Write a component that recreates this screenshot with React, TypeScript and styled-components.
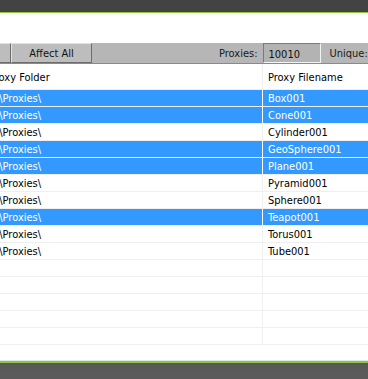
import React from "react";
import styled, { createGlobalStyle } from "styled-components";

const GlobalStyle = createGlobalStyle`
  html, body {
    margin: 0;
    padding: 0;
    background: #ffffff;
  }
  body {
    width: 368px;
    height: 379px;
    overflow: hidden;
    font-family: "DejaVu Sans Condensed", "Liberation Sans", sans-serif;
    font-size: 11px;
  }
`;

const Main = styled.div`
  display: flex;
  flex-direction: column;
  width: 368px;
  height: 379px;
  overflow: hidden;
`;

const TitleStrip = styled.div`
  height: 12px;
  flex: none;
  background: #434343;
  border-bottom: 1px solid #8dc63f;
`;

const Spacer = styled.div`
  height: 30px;
  flex: none;
  background: #ffffff;
`;

const Toolbar = styled.div`
  height: 20px;
  flex: none;
  display: flex;
  align-items: stretch;
  background: #b6b6b6;
  border-bottom: 1px solid #8a8a8a;
  overflow: hidden;
`;

const ToolbarTrack = styled.div`
  display: flex;
  align-items: stretch;
  margin-left: -70px;
  white-space: nowrap;
`;

const Button = styled.div<{ $width: number }>`
  width: ${(p) => p.$width}px;
  box-sizing: border-box;
  display: flex;
  align-items: center;
  justify-content: center;
  background: #bdbdbd;
  color: #111;
  border-style: solid;
  border-width: 1px;
  border-color: #e2e2e2 #6c6c6c #6c6c6c #e2e2e2;
`;

const Label = styled.span<{ $left: number }>`
  margin-left: ${(p) => p.$left}px;
  display: flex;
  align-items: center;
  padding-right: 5px;
  color: #1a1a1a;
`;

const NumberBox = styled.div`
  width: 58px;
  box-sizing: border-box;
  display: flex;
  align-items: center;
  padding: 2px 0 0 5px;
  background: #b3b3b3;
  color: #111;
  border-style: solid;
  border-width: 1px;
  border-color: #7a7a7a #f4f4f4 #f4f4f4 #7a7a7a;
`;

const View = styled.div`
  flex: 1;
  overflow: hidden;
  background: #ffffff;
`;

const Track = styled.div`
  margin-left: -15px;
  display: flex;
  flex-direction: column;
  width: 460px;
`;

const Row = styled.div<{ $head?: boolean; $sel?: boolean }>`
  display: grid;
  grid-template-columns: 278px 1fr;
  height: ${(p) => (p.$head ? 25 : 16)}px;
  border-bottom: 1px solid #efefef;
  background: ${(p) => (p.$sel ? "#3399ff" : "#ffffff")};
  color: ${(p) => (p.$sel ? "#ffffff" : "#000000")};
`;

const Cell = styled.div<{ $first?: boolean; $sel?: boolean; $head?: boolean }>`
  display: flex;
  align-items: center;
  padding-left: ${(p) => (p.$first ? 4 : 5)}px;
  padding-top: ${(p) => (p.$head ? 2 : 0)}px;
  white-space: nowrap;
  overflow: hidden;
  border-right: ${(p) =>
    p.$first ? `1px solid ${p.$sel ? "#ffffff" : "#efefef"}` : "none"};
`;

const Footer = styled.div`
  height: 18px;
  flex: none;
  border-top: 1px solid #e6e6e6;
  background: linear-gradient(#8dc63f 0 2px, #585858 2px, #5c5c5c 100%);
`;

const files = [
  { name: "Box001", sel: true },
  { name: "Cone001", sel: true },
  { name: "Cylinder001", sel: false },
  { name: "GeoSphere001", sel: true },
  { name: "Plane001", sel: true },
  { name: "Pyramid001", sel: false },
  { name: "Sphere001", sel: false },
  { name: "Teapot001", sel: true },
  { name: "Torus001", sel: false },
  { name: "Tube001", sel: false },
];

const App: React.FC = () => {
  const empty = Array.from({ length: 5 });

  return (
    <Main>
      <GlobalStyle />
      <TitleStrip />
      <Spacer />
      <Toolbar>
        <ToolbarTrack>
          <Button $width={81}>Select</Button>
          <Button $width={81}>Affect All</Button>
          <Label $left={127}>Proxies:</Label>
          <NumberBox>10010</NumberBox>
          <Label $left={9}>Unique:</Label>
        </ToolbarTrack>
      </Toolbar>
      <View>
        <Track>
          <Row $head>
            <Cell $first $head>
              Proxy Folder
            </Cell>
            <Cell $head>Proxy Filename</Cell>
          </Row>
          {files.map((f) => (
            <Row key={f.name} $sel={f.sel}>
              <Cell $first $sel={f.sel}>
                C:\Proxies\
              </Cell>
              <Cell>{f.name}</Cell>
            </Row>
          ))}
          {empty.map((_, i) => (
            <Row key={i}>
              <Cell $first />
              <Cell />
            </Row>
          ))}
        </Track>
      </View>
      <Footer />
    </Main>
  );
};

export default App;
